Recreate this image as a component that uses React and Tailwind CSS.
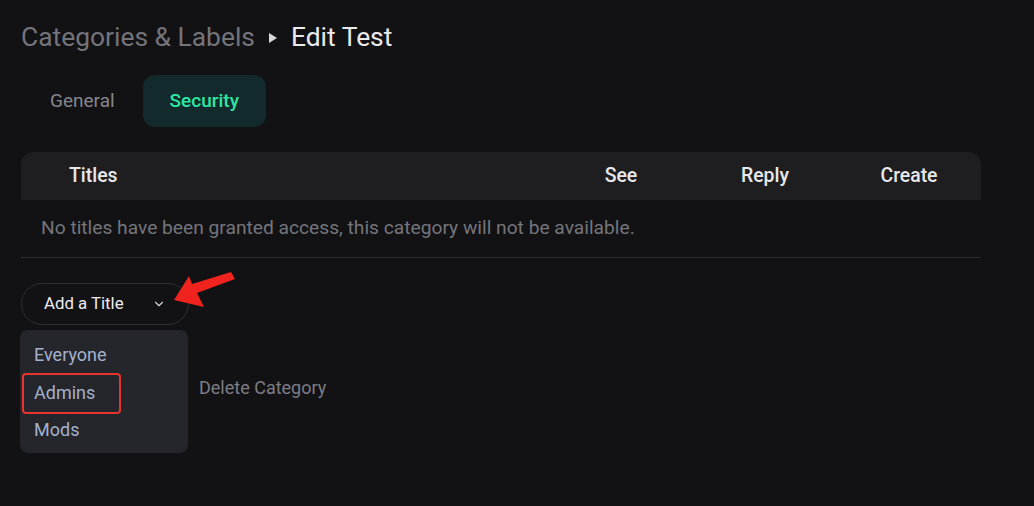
import React from 'react';
import { ChevronDown } from 'lucide-react';

const tabs = ['General', 'Security'];
const titles = ['Everyone', 'Admins', 'Mods'];

export default function App() {
    return (
        <div className="w-[1034px] h-[506px] bg-[#121214] font-['Roboto',sans-serif] overflow-hidden pl-[21px] pt-[20px]">
            {/* Breadcrumb */}
            <div className="flex items-center h-[34px] text-[26.4px] leading-none">
                <span className="text-[#74747b]">Categories &amp; Labels</span>
                <svg width="8" height="10" viewBox="0 0 8 10" className="ml-[14px] mr-[14px] mt-[2px]">
                    <path d="M0 0 L8 5 L0 10 Z" fill="#d8d8dc" />
                </svg>
                <span className="text-[#ebebee]">Edit Test</span>
            </div>

            {/* Tabs */}
            <div className="flex gap-[1px] mt-[21px] ml-[2px]">
                {tabs.map((tab) => (
                    <div
                        key={tab}
                        className={`h-[52px] px-[27px] flex items-center rounded-[12px] text-[19px] ${tab === 'Security' ? 'bg-[#132a2c] text-[#2ee6a3] font-medium' : 'text-[#86868d]'}`}
                    >
                        {tab}
                    </div>
                ))}
            </div>

            {/* Table */}
            <div className="w-[960px] mt-[25px]">
                <div className="grid grid-cols-[1fr_144px_144px_144px] h-[48px] items-center bg-[#1e1e21] rounded-t-[12px] text-[19.4px] text-[#e8e8eb] font-medium">
                    <span className="pl-[48px]">Titles</span>
                    <span className="text-center">See</span>
                    <span className="text-center">Reply</span>
                    <span className="text-center">Create</span>
                </div>
                <div className="h-[58px] flex items-center pl-[20px] text-[19.2px] text-[#75757c] border-b border-[#2d2d31]">
                    No titles have been granted access, this category will not be available.
                </div>
            </div>

            {/* Add a Title */}
            <div className="relative mt-[25px] w-[168px]">
                <div className="h-[42px] rounded-full border border-[#2f2f33] flex items-center justify-between pl-[22px] pr-[22px] text-[16.8px] text-[#ededf0]">
                    <span>Add a Title</span>
                    <ChevronDown size={14} strokeWidth={2} className="text-[#d4d4d8]" />
                </div>

                <div className="absolute left-[-1px] top-[47px] w-[168px] h-[123px] bg-[#24262b] rounded-[8px] z-10 pt-[6px]">
                    {titles.map((t) => (
                        <div key={t} className="h-[37.5px] flex items-center pl-[14px] text-[18px] text-[#a4b1cb] relative">
                            {t}
                            {t === 'Admins' && (
                                <div className="absolute left-[2px] top-[-1px] w-[99px] h-[41px] border-2 border-[#e8342e] rounded-[4px]" />
                            )}
                        </div>
                    ))}
                </div>

                {/* Annotation arrow */}
                <svg className="absolute left-[129px] top-[-13px] z-20" width="90" height="40" viewBox="150 270 90 40">
                    <path d="M174 300 L189 276 L192 284 L231 272 L235 279 L197 293 L204 307 Z" fill="#f0231f" />
                </svg>
            </div>

            {/* Actions */}
            <div className="flex items-center h-[44px] mt-[40px] pl-[178px] text-[18px] text-[#7d7d85]">
                Delete Category
            </div>
        </div>
    );
}
